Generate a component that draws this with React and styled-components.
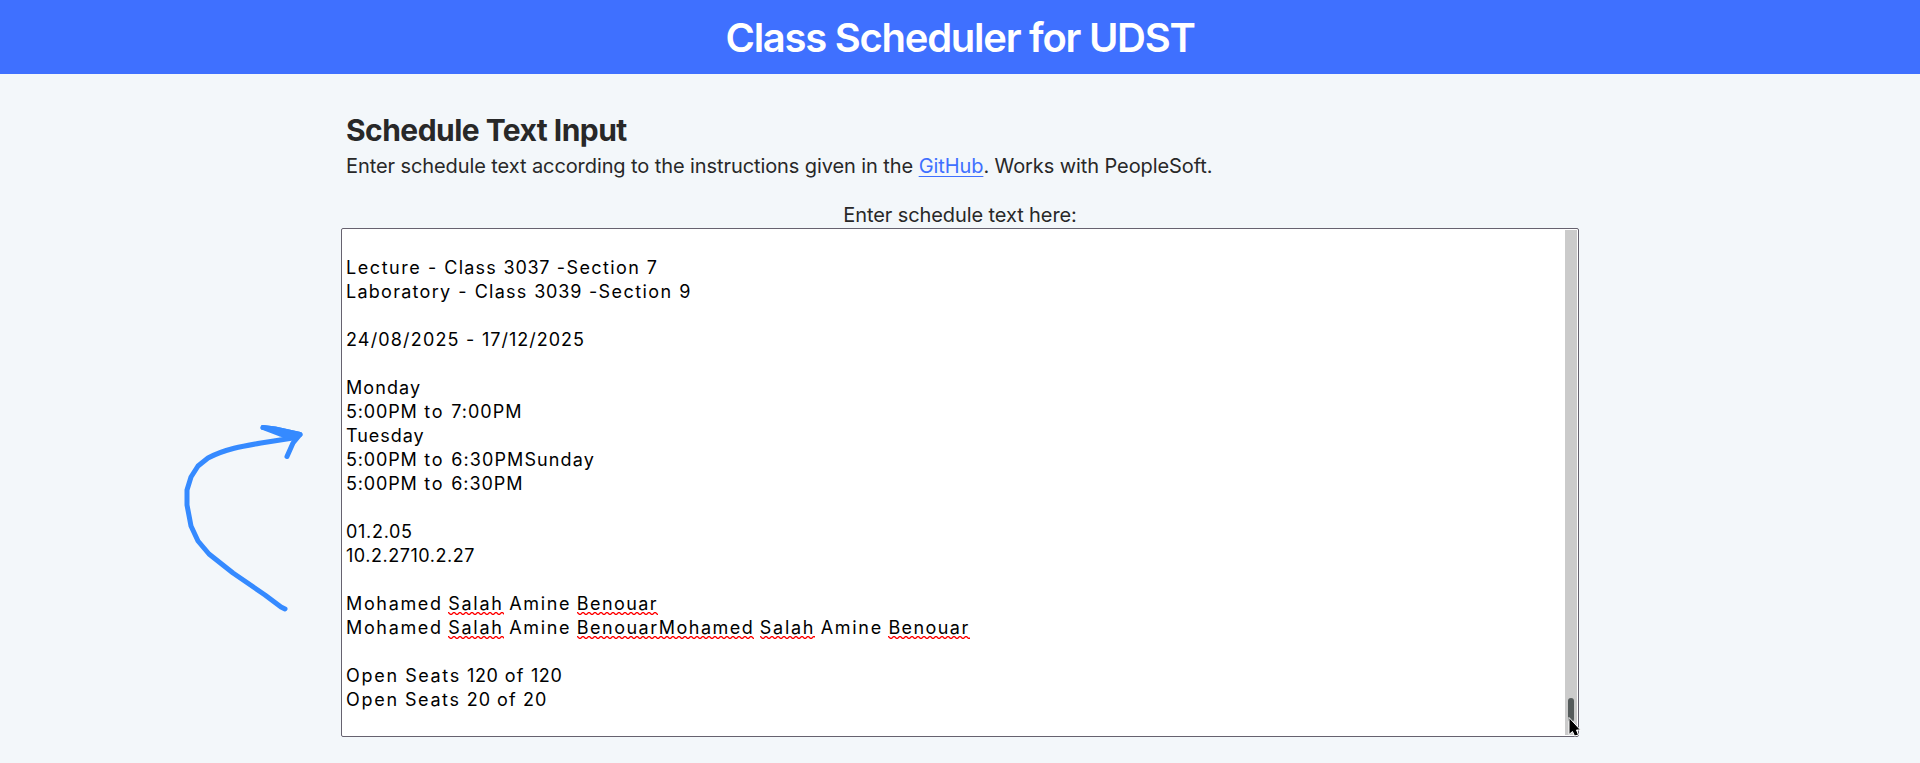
import React from "react";
import styled, { createGlobalStyle } from "styled-components";

const GlobalStyle = createGlobalStyle`
  * { box-sizing: border-box; }
  html, body { margin: 0; background: #f3f7fa; }
  body {
    height: 763px;
    overflow: hidden;
    font-family: Inter, "Liberation Sans", sans-serif;
    font-size: 20px;
    color: #282828;
  }
`;

const Page = styled.div`
  position: relative;
  height: 763px;
  display: flex;
  flex-direction: column;
  align-items: center;
`;

const Header = styled.header`
  width: 100%;
  height: 74px;
  flex: none;
  display: flex;
  align-items: center;
  justify-content: center;
  background: #3f70ff;
`;

const Title = styled.h1`
  margin: 0;
  padding-top: 2px;
  color: #fff;
  font-size: 40px;
  line-height: 48px;
  font-weight: 600;
  letter-spacing: -1.27px;
`;

const Main = styled.main`
  width: 1238px;
  padding-top: 36px;
  display: flex;
  flex-direction: column;
`;

const Intro = styled.section`
  padding-left: 5px;
`;

const Heading = styled.h2`
  margin: 0;
  font-size: 30px;
  line-height: 40px;
  font-weight: 700;
  letter-spacing: -0.54px;
`;

const Description = styled.p`
  margin: 0;
  line-height: 32px;
  letter-spacing: -0.09px;
`;

const Link = styled.a`
  color: #3f70ff;
  text-decoration: underline 1px;
  text-underline-offset: 3px;
  text-decoration-skip-ink: none;
`;

const Label = styled.label`
  margin-top: 20px;
  height: 26px;
  line-height: 26px;
  text-align: center;
  letter-spacing: -0.09px;
`;

const TextArea = styled.div`
  height: 509px;
  display: flex;
  border: 1px solid #66626f;
  border-radius: 2px;
  background: #fff;
  padding: 1px;
`;

const Lines = styled.div`
  flex: 1;
  padding: 26px 0 0 3px;
  font-size: 18px;
  color: #000;
`;

const Line = styled.div`
  height: 24px;
  line-height: 24px;
  white-space: pre;
  word-spacing: ${(p) => p.$gap}px;
`;

const Word = styled.span`
  letter-spacing: ${(p) => p.$tracking}px;
`;

const Misspelled = styled(Word)`
  padding-bottom: 1px;
  background: url("data:image/svg+xml,%3Csvg xmlns='http://www.w3.org/2000/svg' width='6' height='3'%3E%3Cpath d='M-.5 .5L.5 .5L2.5 2.5H3.5L5.5 .5H6.5' fill='none' stroke='red' stroke-width='1.3'/%3E%3C/svg%3E")
    left bottom repeat-x;
`;

const ScrollTrack = styled.div`
  width: 12px;
  display: flex;
  flex-direction: column;
  justify-content: flex-end;
  align-items: center;
  padding-bottom: 13px;
  background: #cbcbcb;
`;

const ScrollThumb = styled.div`
  width: 6px;
  height: 24px;
  border-radius: 3px;
  background: #555b5b;
`;

const Arrow = styled.svg`
  position: absolute;
  left: 180px;
  top: 420px;
  overflow: visible;
`;

const Cursor = styled.svg`
  position: absolute;
  left: 1568px;
  top: 717px;
  overflow: visible;
`;

const TRACKING = {
  Lecture: 1.56, "-": 1.5, Class: 1.22, "3037": 0.7, "3039": 0.8, "-Section": 1.41,
  "7": 0, "9": 0, Laboratory: 1.27, "24/08/2025": 1.16, "17/12/2025": 0.99,
  Monday: 1.09, "5:00PM": 0.83, to: 1.8, "7:00PM": 1.01, Tuesday: 0.95,
  "6:30PMSunday": 1.11, "6:30PM": 0.94, "01.2.05": 0.7, "10.2.2710.2.27": 0.54,
  Mohamed: 1.66, Salah: 1.72, Amine: 1.7, Benouar: 1.42, BenouarMohamed: 1.49,
  Open: 1.74, Seats: 1.62, "120": 0.6, of: 1.21, "20": 1.02,
};

const MISSPELLED = ["Salah", "Benouar", "BenouarMohamed"];

const SCHEDULE = [
  { text: "Lecture - Class 3037 -Section 7", gap: 1.5 },
  { text: "Laboratory - Class 3039 -Section 9", gap: 1.7 },
  { text: "" },
  { text: "24/08/2025 - 17/12/2025", gap: 1.2 },
  { text: "" },
  { text: "Monday" },
  { text: "5:00PM to 7:00PM", gap: 1.7 },
  { text: "Tuesday" },
  { text: "5:00PM to 6:30PMSunday", gap: 1.7 },
  { text: "5:00PM to 6:30PM", gap: 1.7 },
  { text: "" },
  { text: "01.2.05" },
  { text: "10.2.2710.2.27" },
  { text: "" },
  { text: "Mohamed Salah Amine Benouar", gap: 0.45 },
  { text: "Mohamed Salah Amine BenouarMohamed Salah Amine Benouar", gap: 0.45 },
  { text: "" },
  { text: "Open Seats 120 of 120", gap: 1.2 },
  { text: "Open Seats 20 of 20", gap: 1 },
];

function ScheduleLine({ text, gap = 0 }) {
  return (
    <Line $gap={gap}>
      {text.split(" ").map((word, i) => {
        const Part = MISSPELLED.includes(word) ? Misspelled : Word;
        return (
          <React.Fragment key={i}>
            {i > 0 && " "}
            <Part $tracking={TRACKING[word] ?? 0}>{word}</Part>
          </React.Fragment>
        );
      })}
    </Line>
  );
}

export default function App() {
  return (
    <>
      <GlobalStyle />
      <Page>
        <Header>
          <Title>Class Scheduler for UDST</Title>
        </Header>
        <Main>
          <Intro>
            <Heading>Schedule Text Input</Heading>
            <Description>
              Enter schedule text according to the instructions given in the{" "}
              <Link>GitHub</Link>. Works with PeopleSoft.
            </Description>
          </Intro>
          <Label>Enter schedule text here:</Label>
          <TextArea>
            <Lines>
              {SCHEDULE.map((line, i) => (
                <ScheduleLine key={i} {...line} />
              ))}
            </Lines>
            <ScrollTrack>
              <ScrollThumb />
            </ScrollTrack>
          </TextArea>
        </Main>
        <Arrow width="130" height="200" fill="none" stroke="#358aff" strokeWidth="5" strokeLinecap="round" strokeLinejoin="round">
          <path d="M105 189L101 187L85 175L53 153L29 134L18 121L11 106L7 85V70L11 57L18 46L28 38C45 29 63 26 81 23L113 18" />
          <path d="M83 7.500L95 9L120 14.500L113 23L107 36.500" />
          <path d="M83 7.500L100 14L113 17L120 14.500L95 9Z" fill="#358aff" />
        </Arrow>
        <Cursor width="13" height="20">
          <path d="M1 0.500V17.500L4.500 14.500L6.500 19L10.500 18L8.500 13H12.500Z" fill="#000" stroke="#fff" strokeWidth="1" />
        </Cursor>
      </Page>
    </>
  );
}
